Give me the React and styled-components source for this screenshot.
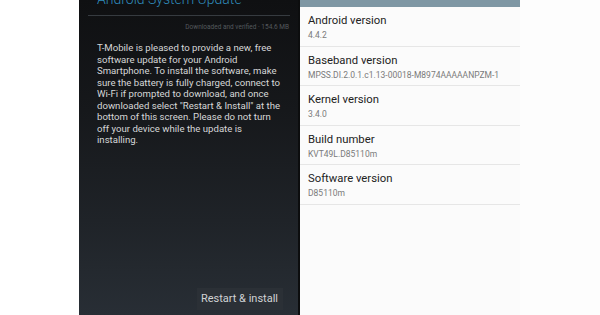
import React from 'react'
import styled, { createGlobalStyle } from 'styled-components'

const GlobalStyle = createGlobalStyle`
  html, body {
    margin: 0;
    padding: 0;
    background: #fdfdfd;
  }
  body {
    font-family: Roboto, "Noto Sans", "Liberation Sans", sans-serif;
  }
`

const bodyLines = [
  'T-Mobile is pleased to provide a new, free',
  'software update for your Android',
  'Smartphone. To install the software, make',
  'sure the battery is fully charged, connect to',
  'Wi-Fi if prompted to download, and once',
  'downloaded select "Restart & Install" at the',
  'bottom of this screen. Please do not turn',
  'off your device while the update is',
  'installing.',
]

const infoRows = [
  { label: 'Android version', value: '4.4.2' },
  { label: 'Baseband version', value: 'MPSS.DI.2.0.1.c1.13-00018-M8974AAAAANPZM-1' },
  { label: 'Kernel version', value: '3.4.0' },
  { label: 'Build number', value: 'KVT49L.D85110m' },
  { label: 'Software version', value: 'D85110m' },
]

const App = () => {
  return (
    <Page>
      <GlobalStyle />
      <Gutter />
      <UpdatePanel>
        <Title>Android System Update</Title>
        <Rule />
        <Meta>Downloaded and verified · 154.6 MB</Meta>
        <Body>
          {bodyLines.map((line, i) => (
            <Line key={i}>{line}</Line>
          ))}
        </Body>
        <Footer>
          <InstallButton type="button">Restart &amp; install</InstallButton>
        </Footer>
      </UpdatePanel>
      <Edge />
      <AboutPanel>
        <TopBar />
        {infoRows.map((row) => (
          <InfoRow key={row.label}>
            <Label>{row.label}</Label>
            <Value>{row.value}</Value>
          </InfoRow>
        ))}
      </AboutPanel>
    </Page>
  )
}

const Page = styled.div`
  display: flex;
  width: 600px;
  height: 315px;
  overflow: hidden;
  background: #fdfdfd;
`

const Gutter = styled.div`
  width: 79px;
  flex: none;
  background: #ffffff;
`

const UpdatePanel = styled.div`
  width: 219px;
  flex: none;
  display: flex;
  flex-direction: column;
  overflow: hidden;
  background: linear-gradient(180deg, #0f1012 0%, #16181b 35%, #1f2328 70%, #282e35 100%);
`

const Title = styled.div`
  margin: -8px 0 0 18px;
  font-size: 14px;
  font-weight: 300;
  line-height: 14px;
  color: #2f8cbc;
  white-space: nowrap;
`

const Rule = styled.div`
  height: 1px;
  margin: 9px 8px 0 9px;
  background: #363b40;
`

const Meta = styled.div`
  margin: 6px 9px 0 0;
  text-align: right;
  font-size: 6.5px;
  line-height: 10px;
  color: #54595d;
  white-space: nowrap;
`

const Body = styled.div`
  margin: 10px 0 0 18px;
  font-size: 9.6px;
  line-height: 11.5px;
  color: #d6d7d8;
`

const Line = styled.span`
  display: block;
  white-space: nowrap;
`

const Footer = styled.div`
  margin-top: auto;
  display: flex;
  justify-content: flex-end;
  padding: 0 15px 5px 0;
`

const InstallButton = styled.button`
  border: none;
  background: #2b3036;
  color: #d0d2d4;
  font-family: inherit;
  font-size: 11px;
  padding: 4px 5px 5px 4px;
  line-height: 13px;
`

const Edge = styled.div`
  width: 2px;
  flex: none;
  background: #0c0d0e;
`

const AboutPanel = styled.div`
  width: 220px;
  flex: none;
  display: flex;
  flex-direction: column;
  background: #fbfbfb;
`

const TopBar = styled.div`
  height: 7px;
  background: #7f97a4;
`

const InfoRow = styled.div`
  height: 39.5px;
  border-bottom: 1px solid #e6e6e6;
  padding: 7px 0 0 8px;
  box-sizing: border-box;
`

const Label = styled.div`
  font-size: 11.3px;
  line-height: 14px;
  color: #222;
  white-space: nowrap;
`

const Value = styled.div`
  margin-top: 2px;
  font-size: 8.5px;
  line-height: 10px;
  color: #7a7a7a;
  white-space: nowrap;
`

export default App
